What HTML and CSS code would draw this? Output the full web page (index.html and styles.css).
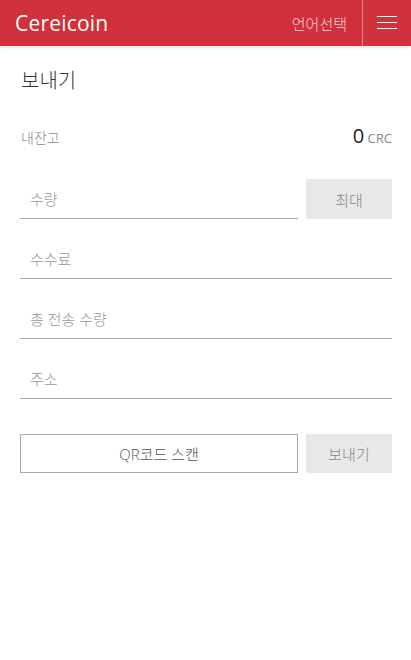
FILE: index.html
```html
<!DOCTYPE html>
<html lang="ko">
<head>
    <meta charset="UTF-8">
    <meta name="viewport" content="width=device-width, initial-scale=1.0">
    <title>Cereicoin - 보내기</title>
    <link rel="stylesheet" href="styles.css">
</head>
<body>
    <header class="topbar">
        <div class="brand">Cereicoin</div>
        <a class="lang">언어선택</a>
        <button class="menu-btn" aria-label="menu">
            <svg width="20" height="14" viewBox="0 0 20 14">
                <path d="M0 0.5H20M0 6.5H20M0 12.5H20" stroke="#fff" stroke-width="1"/>
            </svg>
        </button>
    </header>

    <div class="container">
        <h2 class="page-title">보내기</h2>

        <div class="balance">
            <span class="balance-label">내잔고</span>
            <span class="balance-value"><b>0</b> CRC</span>
        </div>

        <div class="row first">
            <input type="text" placeholder="수량">
            <button class="side-btn">최대</button>
        </div>
        <div class="row">
            <input type="text" placeholder="수수료">
        </div>
        <div class="row">
            <input type="text" placeholder="총 전송 수량">
        </div>
        <div class="row">
            <input type="text" placeholder="주소">
        </div>

        <div class="row actions">
            <button class="qr-btn">QR코드 스캔</button>
            <button class="side-btn">보내기</button>
        </div>
    </div>
</body>
</html>
```

FILE: styles.css
```css
body {
    font-family: "Open Sans", "Noto Sans CJK KR", sans-serif;
    background-color: #fff;
    margin: 0;
    padding: 0;
}
.topbar {
    display: flex;
    align-items: center;
    height: 46px;
    background-color: #d0313b;
    color: #fff;
    box-shadow: 0 1px 3px rgba(0, 0, 0, 0.15);
}
.brand {
    flex: 1;
    padding-left: 15px;
    font-size: 21px;
    letter-spacing: 0.2px;
}
.lang {
    font-size: 15px;
    font-weight: 300;
    padding-right: 15px;
    color: #f6d2d5;
}
.menu-btn {
    width: 49px;
    height: 46px;
    display: flex;
    align-items: center;
    justify-content: center;
    background: none;
    border: none;
    border-left: 1px solid rgba(255, 255, 255, 0.45);
    padding: 0;
}
.container {
    padding: 0 19px 0 20px;
}
.page-title {
    margin: 0;
    padding: 24px 0 0 1px;
    font-size: 20px;
    font-weight: 300;
    color: #333;
    line-height: 22px;
}
.balance {
    display: flex;
    justify-content: space-between;
    align-items: baseline;
    margin-top: 30px;
    padding-left: 1px;
    height: 22px;
}
.balance-label {
    font-size: 14px;
    font-weight: 300;
    color: #888;
}
.balance-value {
    font-size: 13px;
    color: #888;
}
.balance-value b {
    font-size: 20px;
    font-weight: normal;
    color: #222;
}
.row {
    display: flex;
    gap: 8px;
    margin-top: 20px;
    height: 40px;
}
.row.first {
    margin-top: 35px;
}
input {
    flex: 1;
    min-width: 0;
    border: none;
    border-bottom: 1px solid #aaa;
    padding: 0 0 0 10px;
    font-family: inherit;
    font-size: 15px;
    font-weight: 300;
    color: #333;
    outline: none;
}
input::placeholder {
    color: #999;
}
.side-btn {
    width: 86px;
    flex: none;
    border: none;
    background-color: #e8e8e8;
    color: #888;
    font-family: inherit;
    font-size: 15px;
    font-weight: 300;
}
.actions {
    margin-top: 35px;
    height: 39px;
}
.qr-btn {
    flex: 1;
    background: #fff;
    border: 1px solid #aaa;
    color: #555;
    font-family: inherit;
    font-size: 15px;
    font-weight: 300;
}
```
